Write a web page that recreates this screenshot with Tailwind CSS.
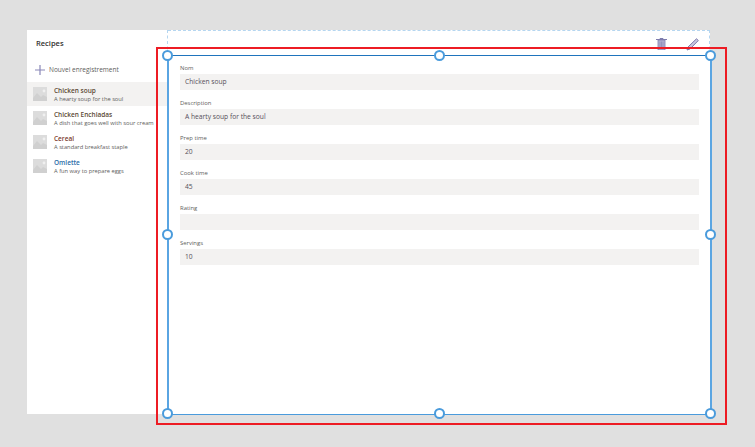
<!DOCTYPE html>
<html><head><meta charset="utf-8"><script src="https://cdn.jsdelivr.net/npm/@tailwindcss/browser@4"></script></head>
<body class="m-0">
<div class="relative w-[755px] h-[447px] overflow-hidden bg-[#e0e0e0] pt-[30px] pl-[27px] font-['Open_Sans',sans-serif]">
  <div class="flex w-[683px] h-[384px] bg-white">
    <div class="w-[141px] shrink-0">
      <div class="h-[27px] pl-[9px] pt-[8px] text-[7.500px] leading-[10px] font-semibold text-[#323130]">Recipes</div>
      <div class="h-[25px] flex items-center pl-[8px] gap-[4px] text-[6.500px] text-[#605e5c]">
        <svg width="10" height="10" viewBox="0 0 10 10"><path d="M5 0V10M0 5H10" stroke="#8a88b8" stroke-width="1.2"/></svg>
        <span class="pt-[1px]">Nouvel enregistrement</span>
      </div>
      <div class="flex flex-col">
        <div class="h-[24px] flex items-center pl-[6px] gap-[7px] bg-[#f3f2f1]">
          <svg width="14" height="14" viewBox="0 0 14 14"><rect width="14" height="14" fill="#dcdcdc"/><path d="M0 11L4 6L8 10L10 8L14 10V14H0Z" fill="#d0d0d0"/><circle cx="11" cy="4" r="1.400" fill="#f0f0f0"/></svg>
          <div class="text-[6.500px] leading-[8px] pt-[1px]"><div class="font-semibold text-[#5b4a35]">Chicken soup</div><div class="text-[5.750px] text-[#605e5c] whitespace-nowrap">A hearty soup for the soul</div></div>
        </div>
        <div class="h-[24px] flex items-center pl-[6px] gap-[7px]">
          <svg width="14" height="14" viewBox="0 0 14 14"><rect width="14" height="14" fill="#dcdcdc"/><path d="M0 11L4 6L8 10L10 8L14 10V14H0Z" fill="#d0d0d0"/><circle cx="11" cy="4" r="1.400" fill="#f0f0f0"/></svg>
          <div class="text-[6.500px] leading-[8px] pt-[1px]"><div class="font-semibold text-[#5b4a35]">Chicken Enchiadas</div><div class="text-[5.750px] text-[#605e5c] whitespace-nowrap">A dish that goes well with sour cream</div></div>
        </div>
        <div class="h-[24px] flex items-center pl-[6px] gap-[7px]">
          <svg width="14" height="14" viewBox="0 0 14 14"><rect width="14" height="14" fill="#dcdcdc"/><path d="M0 11L4 6L8 10L10 8L14 10V14H0Z" fill="#d0d0d0"/><circle cx="11" cy="4" r="1.400" fill="#f0f0f0"/></svg>
          <div class="text-[6.500px] leading-[8px] pt-[1px]"><div class="font-semibold text-[#7a3b2e]">Cereal</div><div class="text-[5.750px] text-[#605e5c] whitespace-nowrap">A standard breakfast staple</div></div>
        </div>
        <div class="h-[24px] flex items-center pl-[6px] gap-[7px]">
          <svg width="14" height="14" viewBox="0 0 14 14"><rect width="14" height="14" fill="#dcdcdc"/><path d="M0 11L4 6L8 10L10 8L14 10V14H0Z" fill="#d0d0d0"/><circle cx="11" cy="4" r="1.400" fill="#f0f0f0"/></svg>
          <div class="text-[6.500px] leading-[8px] pt-[1px]"><div class="font-semibold text-[#2b6ca8]">Omlette</div><div class="text-[5.750px] text-[#605e5c] whitespace-nowrap">A fun way to prepare eggs</div></div>
        </div>
      </div>
    </div>
    <div class="flex-1 flex flex-col">
      <div class="h-[25px] flex justify-end items-start gap-[19px] pr-[10px] pt-[7px] border-t border-r border-dashed border-[#b5d6f0]">
        <svg width="11" height="12" viewBox="0 0 11 12"><path d="M0 1.500H11M4 1.500V.5H7V1.500" stroke="#7e7cad" fill="none"/><path d="M2 2H9V12H2Z" fill="#b5b4d4" stroke="#7e7cad" stroke-width=".8"/><path d="M4 3.500V11M5.500 3.500V11M7 3.500V11" stroke="#7e7cad" stroke-width=".6"/></svg>
        <svg width="13" height="13" viewBox="0 0 13 13"><path d="M1 12L2 9L10.500 .8L12.300 2.500L4 11Z" fill="#c9c8e0" stroke="#6f6da3" stroke-width=".9"/></svg>
      </div>
      <div class="flex-1 pl-[12px] pr-[11px] pt-[9px] flex flex-col gap-[9px] text-[#605e5c]">
        <div class="h-[26px]"><div class="h-[10px] text-[5.900px] leading-[8px]">Nom</div><div class="h-[16px] bg-[#f3f2f1] pl-[5px] text-[6.700px] leading-[16px] text-[#55505a]">Chicken soup</div></div>
        <div class="h-[26px]"><div class="h-[10px] text-[5.900px] leading-[8px]">Description</div><div class="h-[16px] bg-[#f3f2f1] pl-[5px] text-[6.700px] leading-[16px] text-[#55505a]">A hearty soup for the soul</div></div>
        <div class="h-[26px]"><div class="h-[10px] text-[5.900px] leading-[8px]">Prep time</div><div class="h-[16px] bg-[#f3f2f1] pl-[5px] text-[6.700px] leading-[16px] text-[#55505a]">20</div></div>
        <div class="h-[26px]"><div class="h-[10px] text-[5.900px] leading-[8px]">Cook time</div><div class="h-[16px] bg-[#f3f2f1] pl-[5px] text-[6.700px] leading-[16px] text-[#55505a]">45</div></div>
        <div class="h-[26px]"><div class="h-[10px] text-[5.900px] leading-[8px]">Rating</div><div class="h-[16px] bg-[#f3f2f1]"></div></div>
        <div class="h-[26px]"><div class="h-[10px] text-[5.900px] leading-[8px]">Servings</div><div class="h-[16px] bg-[#f3f2f1] pl-[5px] text-[6.700px] leading-[16px] text-[#55505a]">10</div></div>
      </div>
    </div>
  </div>

  <div class="absolute left-[167px] top-[30px] h-[25px] border-l border-dashed border-[#b5d6f0]"></div>
  <div class="absolute left-[167px] top-[55px] w-[545px] h-[360px] border-x-2 border-y border-x-[#5aa5e2] border-t-[#1f74bd] border-b-[#4a9bdc]"></div>
  <div class="absolute left-[156px] top-[47px] w-[571px] h-[378px] border-2 border-[#ed1c24]"></div>
  <div class="absolute left-[162px] top-[50px] size-[11px] rounded-full bg-white border-2 border-[#4a9bdc]"></div>
  <div class="absolute left-[434px] top-[50px] size-[11px] rounded-full bg-white border-2 border-[#4a9bdc]"></div>
  <div class="absolute left-[705px] top-[50px] size-[11px] rounded-full bg-white border-2 border-[#4a9bdc]"></div>
  <div class="absolute left-[162px] top-[229px] size-[11px] rounded-full bg-white border-2 border-[#4a9bdc]"></div>
  <div class="absolute left-[705px] top-[229px] size-[11px] rounded-full bg-white border-2 border-[#4a9bdc]"></div>
  <div class="absolute left-[162px] top-[408px] size-[11px] rounded-full bg-white border-2 border-[#4a9bdc]"></div>
  <div class="absolute left-[434px] top-[408px] size-[11px] rounded-full bg-white border-2 border-[#4a9bdc]"></div>
  <div class="absolute left-[705px] top-[408px] size-[11px] rounded-full bg-white border-2 border-[#4a9bdc]"></div>
</div>
</body></html>
